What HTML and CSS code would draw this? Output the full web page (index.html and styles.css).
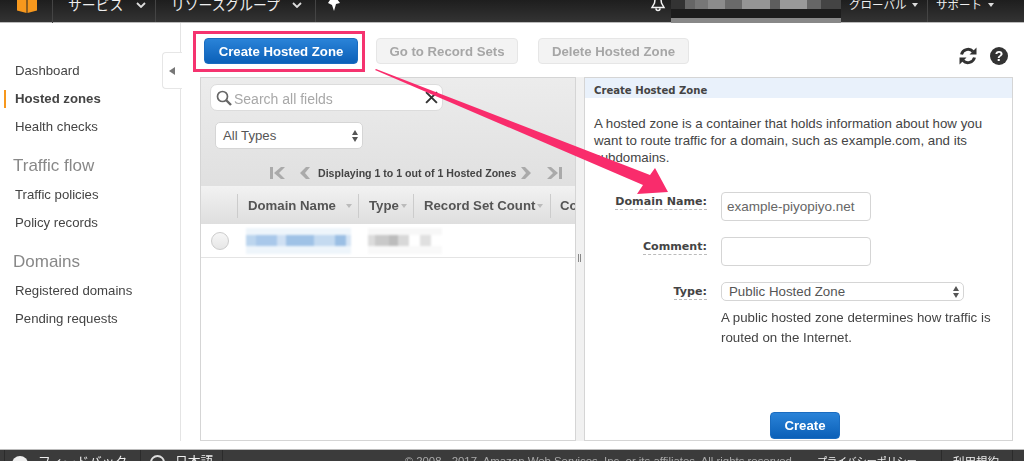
FILE: index.html
```html
<!DOCTYPE html>
<html lang="ja">
<head>
<meta charset="utf-8">
<title>Route 53 Hosted Zones</title>
<link rel="stylesheet" href="styles.css">
</head>
<body>
<div class="page">
  <header class="topbar">
    <div class="logo-cell">
      <svg class="logo" viewBox="0 0 20 14" width="20" height="14"><path d="M0 0h9.500v14L0 11.500zM10.500 0H20v11.500L10.500 14z" fill="#f7981d"/></svg>
    </div>
    <div class="nav-cell nav-services"><span>サービス</span><svg class="chev" viewBox="0 0 10 6" width="10" height="6"><path d="M1 1l4 4 4-4" fill="none" stroke="#ddd" stroke-width="1.8"/></svg></div>
    <div class="nav-cell nav-groups"><span>リソースグループ</span><svg class="chev" viewBox="0 0 10 6" width="10" height="6"><path d="M1 1l4 4 4-4" fill="none" stroke="#ddd" stroke-width="1.8"/></svg></div>
    <div class="nav-cell nav-pin"><svg viewBox="0 0 14 14" width="14" height="14"><path d="M2 0h9l-1 2 3 4-4 1-2 7-2-6-4-2 2-3z" fill="#fff"/></svg></div>
    <div class="top-right">
      <svg class="bell" viewBox="0 0 16 16" width="16" height="16"><path d="M5.500 0L4.500 7 2 11.500h12L11.500 7 10.500 0M6 12.500a2 2 0 0 0 4 0" fill="none" stroke="#f2f2f2" stroke-width="1.500"/></svg>
      <div class="redact"></div>
      <div class="menu menu-global"><span>グローバル</span><i class="caret"></i></div>
      <div class="menu menu-support"><span>サポート</span><i class="caret"></i></div>
    </div>
  </header>

  <div class="body-row">
    <nav class="sidebar">
      <a class="side-link">Dashboard</a>
      <a class="side-link active">Hosted zones</a>
      <a class="side-link">Health checks</a>
      <h2 class="side-head">Traffic flow</h2>
      <a class="side-link">Traffic policies</a>
      <a class="side-link">Policy records</a>
      <h2 class="side-head">Domains</h2>
      <a class="side-link">Registered domains</a>
      <a class="side-link">Pending requests</a>
      <div class="collapse-tab"><i></i></div>
    </nav>

    <main class="content">
      <div class="toolbar">
        <button class="btn btn-primary btn-create-zone">Create Hosted Zone</button>
        <button class="btn btn-off btn-go">Go to Record Sets</button>
        <button class="btn btn-off btn-delete">Delete Hosted Zone</button>
        <div class="tool-icons">
          <svg viewBox="0 0 20 20" width="20" height="20"><path d="M3.500 8.500A6.800 6.800 0 0 1 15 5.500M16.500 11.500A6.800 6.800 0 0 1 5 14.500" fill="none" stroke="#333" stroke-width="3"/><path d="M18.500 1.500v7h-7zM1.500 18.500v-7h7z" fill="#333"/></svg>
          <span class="help">?</span>
        </div>
      </div>

      <div class="panels">
        <section class="list-panel">
          <div class="filters">
            <div class="search">
              <svg viewBox="0 0 16 16" width="16" height="16"><circle cx="6.500" cy="6.500" r="5" fill="none" stroke="#666" stroke-width="1.700"/><path d="M10 10l5 5" stroke="#666" stroke-width="2.400"/></svg>
              <span class="search-text">Search all fields</span>
              <svg class="search-x" viewBox="0 0 12 12" width="13" height="13"><path d="M1 1l10 10M11 1L1 11" stroke="#333" stroke-width="1.800"/></svg>
            </div>
            <div class="select select-types"><span>All Types</span><svg viewBox="0 0 6 12" width="6" height="12"><path d="M3 0l3 5H0zM3 12L0 7h6z" fill="#555"/></svg></div>
            <div class="pager">
              <svg class="pg-first" viewBox="0 0 16 14" width="16" height="14"><path d="M0 1h3v12H0zM11 1l-7 6 7 6h4l-6-6 6-6z" fill="#aaa"/></svg>
              <svg class="pg-prev" viewBox="0 0 10 14" width="10" height="14"><path d="M6 1L0 7l6 6h4L5 7l5-6z" fill="#aaa"/></svg>
              <span class="pg-text">Displaying 1 to 1 out of 1 Hosted Zones</span>
              <svg class="pg-next" viewBox="0 0 10 14" width="10" height="14"><path d="M4 1l6 6-6 6H0l5-6-5-6z" fill="#aaa"/></svg>
              <svg class="pg-last" viewBox="0 0 16 14" width="16" height="14"><path d="M16 1h-3v12h3zM5 1l7 6-7 6H1l6-6-6-6z" fill="#aaa"/></svg>
            </div>
          </div>
          <div class="thead">
            <div class="th th-check"></div>
            <div class="th th-name">Domain Name<i class="sort sort-name"></i></div>
            <div class="th th-type">Type<i class="sort"></i></div>
            <div class="th th-count">Record Set Count<i class="sort"></i></div>
            <div class="th th-comment">Comment</div>
          </div>
          <div class="row">
            <span class="radio"></span>
            <div class="mosaic mosaic-blue"></div>
            <div class="mosaic mosaic-grey"></div>
          </div>
        </section>

        <div class="splitter"><i></i></div>

        <section class="form-panel">
          <h3 class="form-title">Create Hosted Zone</h3>
          <p class="intro">A hosted zone is a container that holds information about how you want to route traffic for a domain, such as example.com, and its subdomains.</p>
          <div class="form-grid">
            <label class="lab lab-domain"><span>Domain Name:</span></label>
            <input class="input" type="text" value="example-piyopiyo.net">
            <label class="lab lab-comment"><span>Comment:</span></label>
            <input class="input" type="text">
            <label class="lab lab-type"><span>Type:</span></label>
            <div class="type-col">
              <div class="select select-zone"><span>Public Hosted Zone</span><svg viewBox="0 0 6 12" width="6" height="12"><path d="M3 0l3 5H0zM3 12L0 7h6z" fill="#555"/></svg></div>
              <p class="hint">A public hosted zone determines how traffic is routed on the Internet.</p>
            </div>
          </div>
          <div class="form-actions"><button class="btn btn-primary btn-create">Create</button></div>
        </section>
      </div>
    </main>
  </div>

  <footer class="footer">
    <div class="foot-cell foot-feedback"><i class="foot-dot"></i><span>フィードバック</span></div>
    <div class="foot-cell foot-lang"><i class="foot-globe"></i><span>日本語</span></div>
    <div class="foot-copy">© 2008 - 2017, Amazon Web Services, Inc. or its affiliates. All rights reserved.</div>
    <div class="foot-cell foot-privacy"><span>プライバシーポリシー</span></div>
    <div class="foot-cell foot-terms"><span>利用規約</span></div>
  </footer>

  <svg class="annotation" viewBox="0 0 1024 461" width="1024" height="461">
    <rect x="194.500" y="32.500" width="169" height="38" fill="none" stroke="#f5336f" stroke-width="3"/>
    <path d="M375 70L376 69 650 175 655 168 668 192 637 194 643 185z" fill="#f92c6c"/>
  </svg>
</div>
</body>
</html>
```

FILE: styles.css
```css
* { box-sizing: border-box; }
html, body { margin: 0; padding: 0; background: #fff; }
body { font-family: "Liberation Sans", Arial, sans-serif; color: #444; overflow: hidden; }
.page { position: relative; width: 1024px; height: 461px; display: flex; flex-direction: column; overflow: hidden; filter: blur(0.35px); }

/* top bar */
.topbar { height: 23px; flex: none; display: flex; align-items: stretch; overflow: hidden; background: linear-gradient(#1e1e1e, #333 95%, #bbb 95%, #bbb); font-family: "Noto Sans CJK JP", sans-serif; color: #eee; }
.logo-cell { width: 53px; flex: none; border-right: 1px solid #444; padding: 0 0 0 17px; }
.logo { display: block; margin-top: -1px; }
.nav-cell { display: flex; align-items: flex-start; height: 22px; border-right: 1px solid #444; font-size: 13.8px; line-height: 8px; padding-left: 15px; }
.nav-cell span { display: block; white-space: nowrap; }
.nav-services { width: 103px; }
.nav-services .chev { margin: 2px 0 0 13px; }
.nav-groups { width: 160px; }
.nav-groups .chev { margin: 2px 0 0 12px; }
.nav-pin { width: 36px; border-right: 0; padding-left: 11px; }
.nav-pin svg { margin-top: -3px; }
.top-right { margin-left: auto; display: flex; align-items: stretch; height: 23px; }
.bell { margin: -4px 5px 0 0; }
.redact { width: 170px; height: 23px; background:
  linear-gradient(#0000 0 78%, #888 78% 100%),
  linear-gradient(#0000 0 39%, #1c1c1c 39% 100%),
  linear-gradient(90deg, #333 0 8%, #666 8% 14%, #777 14% 22%, #8c8c8c 22% 32%, #6a6a6a 32% 42%, #959595 42% 58%, #5e5e5e 58% 64%, #999 64% 80%, #666 80% 88%, #444 88% 100%); }
.menu { display: flex; align-items: flex-start; height: 22px; font-size: 11.5px; line-height: 8px; white-space: nowrap; }
.menu-global { width: 87px; padding-left: 8px; border-right: 1px solid #444; }
.menu-support { width: 96px; padding-left: 8px; }
.caret { width: 0; height: 0; border: 3.5px solid transparent; border-top: 4px solid #ddd; margin: 3px 0 0 6px; }

/* layout */
.body-row { flex: 1; min-height: 0; display: flex; padding-bottom: 8px; }
.sidebar { position: relative; width: 181px; flex: none; border-right: 1px solid #e4e4e4; padding-top: 34px; display: flex; flex-direction: column; }
.side-link { display: block; height: 28px; line-height: 28px; padding-left: 15px; font-size: 13.2px; color: #444; white-space: nowrap; }
.side-link.active { font-weight: bold; position: relative; }
.side-link.active::before { content: ""; position: absolute; left: 4px; top: 5px; width: 2px; height: 18px; background: #f7981d; }
.side-head { margin: 0; height: 43px; padding: 16px 0 0 13px; line-height: 20px; font-size: 17px; font-weight: normal; color: #888; }
.side-head + .side-link { margin-top: -2px; }
.side-link + .side-head { margin-top: -1px; }
.collapse-tab { position: absolute; left: 162px; top: 29px; width: 20px; height: 37px; background: #fff; border: 1px solid #e6e6e6; border-right: 0; border-radius: 4px 0 0 4px; display: flex; align-items: center; justify-content: center; }
.collapse-tab i { width: 0; height: 0; border: 4px solid transparent; border-left: 0; border-right: 6px solid #777; margin-left: -1px; }

.content { flex: 1; min-width: 0; padding: 15px 11px 0 19px; display: flex; flex-direction: column; }
.toolbar { height: 39px; flex: none; display: flex; align-items: flex-start; padding-left: 4px; }
.btn { height: 26px; border-radius: 4px; font: bold 13.2px/25px "Liberation Sans", Arial, sans-serif; padding: 0; border: 1px solid transparent; }
.btn-primary { color: #fff; background: linear-gradient(#2a83d8, #0b60b8); border-color: #1a6cc0; }
.btn-off { color: #a6a6a6; background: #f3f3f3; border-color: #e6e6e6; }
.btn-create-zone { width: 154px; }
.btn-go { width: 142px; margin-left: 18px; }
.btn-delete { width: 151px; margin-left: 20px; }
.tool-icons { margin-left: auto; display: flex; align-items: center; gap: 12px; margin-top: 8px; margin-right: 5px; }
.tool-icons svg { display: block; }
.help { width: 18px; height: 18px; border-radius: 50%; background: #333; color: #fff; font: bold 14px/18px "Liberation Sans", sans-serif; text-align: center; }

.panels { flex: 1; min-height: 0; display: flex; }
.list-panel { width: 376px; flex: none; border: 1px solid #d5d5d5; background: #fff; overflow: hidden; }
.splitter { width: 8px; flex: none; background: #f1f1f1; position: relative; }
.splitter i { position: absolute; left: 2px; top: 177px; width: 3px; height: 8px; background: repeating-linear-gradient(90deg, #888 0 1px, transparent 1px 2px); }
.form-panel { flex: 1; min-width: 0; border: 1px solid #d5d5d5; background: #fff; display: flex; flex-direction: column; }

.filters { height: 108px; background: linear-gradient(#ececec, #e0e0e0); padding: 6px 0 0 9px; display: flex; flex-direction: column; position: relative; }
.search { width: 233px; height: 27px; background: #fff; border: 1px solid #dcdcdc; border-radius: 7px; display: flex; align-items: center; padding: 0 4px 0 5px; }
.search-text { margin-left: 2px; padding-top: 2px; font-size: 14px; color: #a8a8a8; }
.search-x { margin-left: auto; }
.select { display: flex; align-items: center; justify-content: space-between; background: #fff; border: 1px solid #d5d5d5; border-radius: 5px; color: #555; white-space: nowrap; }
.select-types { width: 148px; height: 27px; margin: 11px 0 0 5px; padding: 0 4px 0 7px; font-size: 13.2px; }
.pager { display: flex; align-items: center; height: 18px; margin-top: 15px; padding-left: 60px; }
.pg-prev { margin-left: 14px; }
.pg-text { margin-left: 8px; width: 203px; font-size: 10.6px; font-weight: bold; color: #444; white-space: nowrap; }
.pg-last { margin-left: 15px; }

.thead { height: 38px; display: flex; align-items: center; padding-top: 1px; background: linear-gradient(#f2f2f2, #dedede); font-size: 13.2px; font-weight: bold; color: #555; white-space: nowrap; overflow: hidden; }
.th { height: 24px; line-height: 24px; border-left: 1px solid #ccc; display: flex; flex: none; align-items: center; }
.th-check { width: 36px; border-left: 0; }
.th-name { width: 121px; padding-left: 10px; }
.th-type { width: 55px; padding-left: 10px; }
.th-count { width: 137px; padding-left: 10px; }
.th-comment { padding-left: 9px; }
.sort { width: 0; height: 0; border: 3.5px solid transparent; border-top: 4px solid #bbb; margin: 3px 0 0 2px; }
.sort-name { margin-left: 10px; }

.row { height: 34px; border-bottom: 1px solid #e4e4e4; display: flex; align-items: center; position: relative; padding-left: 10px; }
.radio { width: 18px; height: 18px; border-radius: 50%; border: 1px solid #ccc; background: linear-gradient(#f6f6f6, #e6e6e6); flex: none; margin-top: 1px; }
.mosaic { height: 26px; margin-top: 1px; filter: blur(0.8px); }
.mosaic-blue { width: 105px; margin-left: 17px; background:
  linear-gradient(#eef5fb 0 26%, #0000 26% 70%, #eef5fb 70%),
  linear-gradient(90deg, #bcd5ee 0 10%, #a9c8ea 10% 30%, #cfe0f3 30% 38%, #9fc2e6 38% 65%, #c4daf0 65% 85%, #9bbfe4 85% 95%, #d5e4f4 95%); }
.mosaic-grey { width: 74px; margin-left: 17px; background:
  linear-gradient(#f7f7f7 0 26%, #0000 26% 70%, #f9f9f9 70%),
  linear-gradient(90deg, #dcdcdc 0 10%, #c9c9c9 10% 28%, #bcbcbc 28% 40%, #d8d8d8 40% 55%, #fff 55% 70%, #e0e0e0 70% 85%, #fff 85%); }

.form-title { margin: 0; height: 20px; padding-left: 9px; background: #e9f1fb; font: bold 10.1px/26px "DejaVu Sans", sans-serif; color: #444; }
.intro { margin: 17px 20px 0 9px; font-size: 13.3px; line-height: 17px; color: #444; }
.form-grid { display: grid; grid-template-columns: 123px 150px; column-gap: 13px; margin-top: 26px; row-gap: 16px; grid-template-rows: 29px 29px auto; }
.lab { text-align: right; font: bold 11.1px/16px "DejaVu Sans", sans-serif; color: #444; padding: 2px 1px 0 0; }
.lab span { border-bottom: 1px dashed #bbb; padding-bottom: 1px; }
.input { width: 150px; height: 29px; border: 1px solid #d5d5d5; border-radius: 4px; padding: 0 5px; font: 13.5px "Liberation Sans", sans-serif; color: #666; background: #fff; }
.type-col { width: 275px; }
.select-zone { width: 243px; height: 19px; padding: 0 4px 0 7px; font-size: 13.3px; }
.hint { margin: 7px 0 0; font-size: 13.3px; line-height: 20px; color: #444; }
.form-actions { margin-top: auto; padding: 0 0 1px 185px; }
.btn-create { width: 70px; height: 27px; display: block; }

/* footer */
.footer { height: 12px; flex: none; display: flex; align-items: flex-start; overflow: hidden; background: #3b3b3b; border-top: 1px solid #bbb; font-family: "Noto Sans CJK JP", sans-serif; color: #eee; font-size: 12.8px; }
.foot-cell { display: flex; align-items: flex-start; height: 12px; border-right: 1px solid #2b2b2b; flex: none; white-space: nowrap; line-height: 22px; }
.foot-feedback { width: 137px; padding-left: 7px; border-left: 1px solid #2b2b2b; margin-left: 4px; }
.foot-dot { width: 16px; height: 16px; border-radius: 50%; background: #eee; margin: 6px 10px 0 0; flex: none; }
.foot-lang { width: 82px; padding-left: 9px; }
.foot-globe { width: 15px; height: 15px; border-radius: 50%; border: 2px solid #ddd; margin: 5px 10px 0 0; flex: none; }
.foot-copy { width: 583px; padding-right: 11px; text-align: right; font: 11.4px/22px "Liberation Sans", sans-serif; color: #aaa; white-space: nowrap; }
.foot-privacy { width: 136px; padding-left: 11px; font-size: 10px; }
.foot-terms { width: 71px; padding-left: 11px; font-size: 11.5px; }

/* screenshot annotation */
.annotation { position: absolute; left: 0; top: 0; pointer-events: none; }
```
